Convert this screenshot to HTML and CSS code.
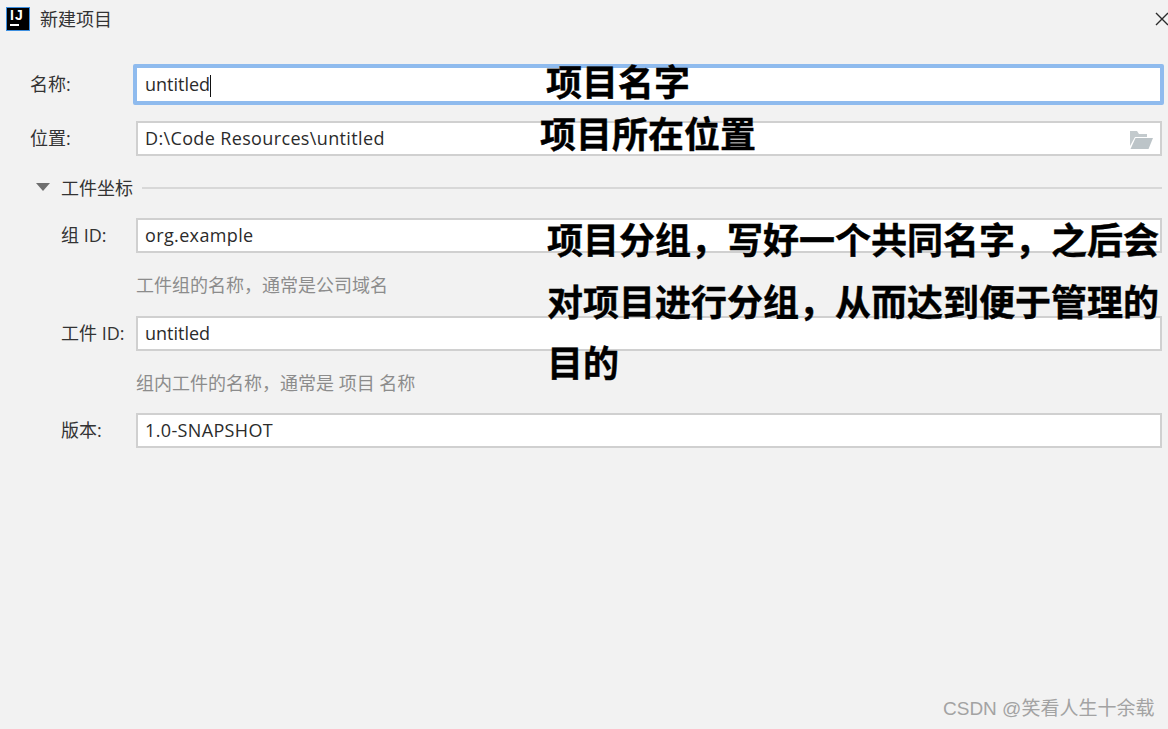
FILE: index.html
```html
<!DOCTYPE html>
<html lang="zh-CN">
<head>
<meta charset="utf-8">
<title>新建项目</title>
<link rel="stylesheet" href="styles.css">
</head>
<body>
<div class="dialog">
  <header class="titlebar">
    <div class="logo"><span class="logo-text">IJ</span><span class="logo-bar"></span></div>
    <span class="title">新建项目</span>
    <svg class="close" width="14" height="14" viewBox="0 0 14 14"><path d="M1 1 13 13M13 1 1 13" stroke="#2b2b2b" stroke-width="1.4" fill="none"/></svg>
  </header>
  <main class="form">
    <div class="row row-name">
      <label class="label label-focus">名称:</label>
      <div class="field field-focus">untitled<span class="caret"></span></div>
    </div>
    <div class="row row-location">
      <label class="label label-top">位置:</label>
      <div class="field">D:\Code Resources\untitled
        <svg class="folder" width="24" height="20" viewBox="0 0 24 20"><path d="M1 1h7l2 3h8v3H6L1 16z" fill="#c3cacd"/><path d="M6.500 8H24l-4.500 11H1.500z" fill="#bcc4c8"/></svg>
      </div>
    </div>
    <div class="section">
      <svg class="arrow" width="14" height="8" viewBox="0 0 14 8"><path d="M0 0h14L7 8z" fill="#6e6e6e"/></svg>
      <span class="section-title">工件坐标</span>
      <span class="section-line"></span>
    </div>
    <div class="row row-group">
      <label class="label label-sub">组 ID:</label>
      <div class="field">org.example</div>
    </div>
    <p class="help">工件组的名称，通常是公司域名</p>
    <div class="row">
      <label class="label label-sub">工件 ID:</label>
      <div class="field field-tight">untitled</div>
    </div>
    <p class="help help-short">组内工件的名称，通常是 项目 名称</p>
    <div class="row">
      <label class="label label-sub">版本:</label>
      <div class="field">1.0-SNAPSHOT</div>
    </div>
  </main>
</div>
<div class="note note-name">项目名字</div>
<div class="note note-location">项目所在位置</div>
<div class="note note-group">项目分组，写好一个共同名字，之后会对项目进行分组，从而达到便于管理的目的</div>
<div class="watermark">CSDN @笑看人生十余载</div>
</body>
</html>
```
FILE: styles.css
```css
* { box-sizing: border-box; }
html, body { margin: 0; height: 100%; }
body {
  background: #f2f2f2;
  color: #333;
  font-family: "Open Sans", "Noto Sans CJK SC", sans-serif;
  font-size: 18px;
  overflow: hidden;
  position: relative;
}
.dialog { display: flex; flex-direction: column; }
.titlebar {
  display: flex;
  align-items: center;
  height: 38px;
  padding-left: 6px;
}
.logo {
  width: 24px;
  height: 24px;
  background: #000;
  border: 1px solid #3d8fe0;
  position: relative;
  color: #fff;
  flex: none;
}
.logo-text {
  position: absolute;
  left: 3px;
  top: 0;
  font: 700 14px/15px "Liberation Sans", sans-serif;
  letter-spacing: 1px;
}
.logo-bar {
  position: absolute;
  left: 3px;
  top: 16px;
  width: 9px;
  height: 2px;
  background: #fff;
}
.title { margin-left: 10px; line-height: 38px; }
.close { margin-left: auto; margin-right: -1px; margin-top: -1px; }
.form { padding: 26px 4px 0 30px; display: flex; flex-direction: column; }
.row { display: flex; align-items: center; margin-right: 2px; }
.row-name { margin-right: 0; }
.row-location { margin-top: 16px; }
.row-group { margin-top: 19px; }
.label { flex: none; width: 106px; color: #333; line-height: 35px; }
.label-focus { width: 103px; }
.label-sub { padding-left: 31px; white-space: nowrap; }
.field {
  flex: 1;
  height: 35px;
  line-height: 31px;
  padding: 0 7px;
  background: #fff;
  border: 2px solid #d0d0d0;
  color: #2b2b2b;
  letter-spacing: 0.36px;
  position: relative;
  white-space: nowrap;
}
.field-tight { letter-spacing: 0; }
.field-focus {
  height: 41px;
  line-height: 32px;
  padding: 0 8px;
  border: 4px solid #8fbbee;
  border-radius: 2px;
  letter-spacing: 0;
}
.caret {
  display: inline-block;
  width: 1px;
  height: 22px;
  background: #111;
  vertical-align: middle;
  margin-left: 0;
}
.folder { position: absolute; right: 7px; top: 7px; }
.section { display: flex; align-items: center; height: 24px; margin-top: 19px; padding-left: 6px; }
.arrow { flex: none; }
.section-title { margin-left: 11px; white-space: nowrap; }
.section-line { flex: 1; height: 2px; background: #d8d8d8; margin: 1px 2px 0 9px; }
.help {
  margin: 0 0 0 106px;
  height: 63px;
  padding-top: 19px;
  line-height: 26px;
  color: #8c8c8c;
}
.help-short { height: 62px; }
.note {
  position: absolute;
  color: #000;
  font: 700 36px/61.5px "Noto Sans CJK SC", sans-serif;
  -webkit-text-stroke: 0.4px #000;
}
.note-name { left: 546px; top: 50px; }
.note-location { left: 540px; top: 102px; }
.note-group { left: 547px; top: 208px; width: 622px; }
.watermark {
  position: absolute;
  left: 943px;
  top: 696px;
  color: #a3a3a3;
  font: 19px/26px "Liberation Sans", "Noto Sans CJK SC", sans-serif;
  white-space: nowrap;
}
```
